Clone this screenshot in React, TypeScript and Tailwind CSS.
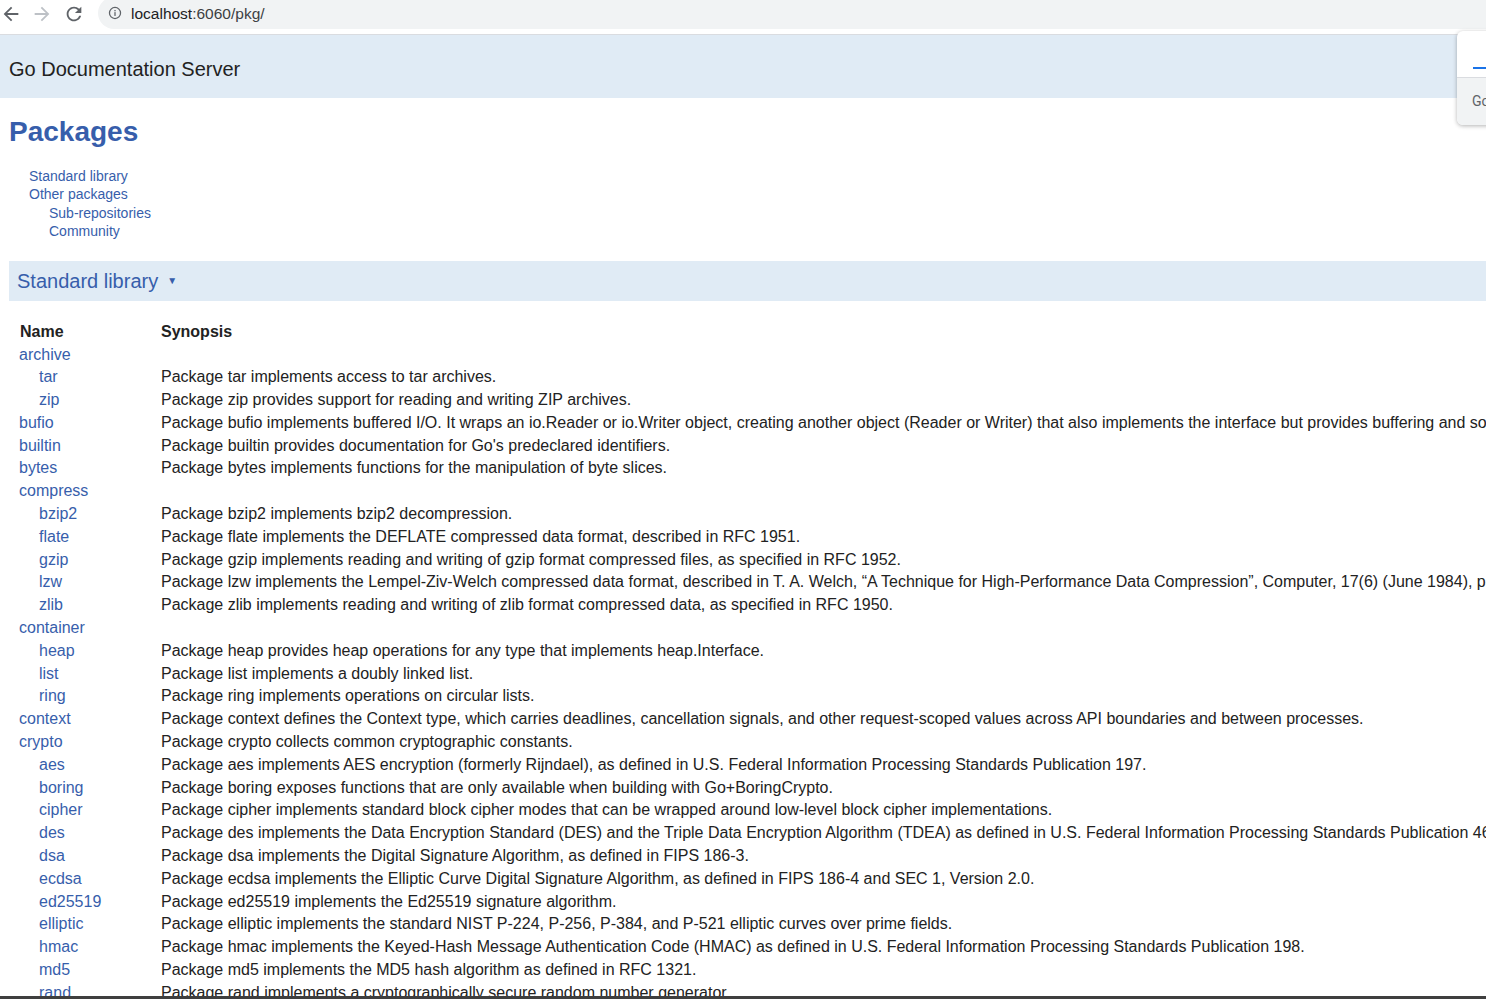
import React from 'react';

type Pkg = { name: string; sub?: boolean; synopsis?: string };

const packages: Pkg[] = [
  { name: 'archive' },
  { name: 'tar', sub: true, synopsis: 'Package tar implements access to tar archives.' },
  { name: 'zip', sub: true, synopsis: 'Package zip provides support for reading and writing ZIP archives.' },
  { name: 'bufio', synopsis: 'Package bufio implements buffered I/O. It wraps an io.Reader or io.Writer object, creating another object (Reader or Writer) that also implements the interface but provides buffering and some help for textual I/O.' },
  { name: 'builtin', synopsis: "Package builtin provides documentation for Go's predeclared identifiers." },
  { name: 'bytes', synopsis: 'Package bytes implements functions for the manipulation of byte slices.' },
  { name: 'compress' },
  { name: 'bzip2', sub: true, synopsis: 'Package bzip2 implements bzip2 decompression.' },
  { name: 'flate', sub: true, synopsis: 'Package flate implements the DEFLATE compressed data format, described in RFC 1951.' },
  { name: 'gzip', sub: true, synopsis: 'Package gzip implements reading and writing of gzip format compressed files, as specified in RFC 1952.' },
  { name: 'lzw', sub: true, synopsis: 'Package lzw implements the Lempel-Ziv-Welch compressed data format, described in T. A. Welch, \u201CA Technique for High-Performance Data Compression\u201D, Computer, 17(6) (June 1984), pp 8-19.' },
  { name: 'zlib', sub: true, synopsis: 'Package zlib implements reading and writing of zlib format compressed data, as specified in RFC 1950.' },
  { name: 'container' },
  { name: 'heap', sub: true, synopsis: 'Package heap provides heap operations for any type that implements heap.Interface.' },
  { name: 'list', sub: true, synopsis: 'Package list implements a doubly linked list.' },
  { name: 'ring', sub: true, synopsis: 'Package ring implements operations on circular lists.' },
  { name: 'context', synopsis: 'Package context defines the Context type, which carries deadlines, cancellation signals, and other request-scoped values across API boundaries and between processes.' },
  { name: 'crypto', synopsis: 'Package crypto collects common cryptographic constants.' },
  { name: 'aes', sub: true, synopsis: 'Package aes implements AES encryption (formerly Rijndael), as defined in U.S. Federal Information Processing Standards Publication 197.' },
  { name: 'boring', sub: true, synopsis: 'Package boring exposes functions that are only available when building with Go+BoringCrypto.' },
  { name: 'cipher', sub: true, synopsis: 'Package cipher implements standard block cipher modes that can be wrapped around low-level block cipher implementations.' },
  { name: 'des', sub: true, synopsis: 'Package des implements the Data Encryption Standard (DES) and the Triple Data Encryption Algorithm (TDEA) as defined in U.S. Federal Information Processing Standards Publication 46-3.' },
  { name: 'dsa', sub: true, synopsis: 'Package dsa implements the Digital Signature Algorithm, as defined in FIPS 186-3.' },
  { name: 'ecdsa', sub: true, synopsis: 'Package ecdsa implements the Elliptic Curve Digital Signature Algorithm, as defined in FIPS 186-4 and SEC 1, Version 2.0.' },
  { name: 'ed25519', sub: true, synopsis: 'Package ed25519 implements the Ed25519 signature algorithm.' },
  { name: 'elliptic', sub: true, synopsis: 'Package elliptic implements the standard NIST P-224, P-256, P-384, and P-521 elliptic curves over prime fields.' },
  { name: 'hmac', sub: true, synopsis: 'Package hmac implements the Keyed-Hash Message Authentication Code (HMAC) as defined in U.S. Federal Information Processing Standards Publication 198.' },
  { name: 'md5', sub: true, synopsis: 'Package md5 implements the MD5 hash algorithm as defined in RFC 1321.' },
  { name: 'rand', sub: true, synopsis: 'Package rand implements a cryptographically secure random number generator.' },
  { name: 'rc4', sub: true, synopsis: "Package rc4 implements RC4 encryption, as defined in Bruce Schneier's Applied Cryptography." },
  { name: 'rsa', sub: true, synopsis: 'Package rsa implements RSA encryption as specified in PKCS #1 and RFC 8017.' },
];

const BrowserBar: React.FC = () => (
  <div className="h-[35px] bg-white border-b border-[#dadce0] flex items-start relative">
    {/* nav buttons */}
    <div className="flex items-center h-[27px]">
      <svg width="22" height="22" viewBox="0 0 24 24">
        <path d="M20 11H7.83l5.59-5.59L12 4l-8 8 8 8 1.41-1.41L7.83 13H20v-2z" fill="#5f6368" />
      </svg>
      <svg width="22" height="22" viewBox="0 0 24 24" className="ml-[9px]">
        <path d="M12 4l-1.41 1.41L16.17 11H4v2h12.17l-5.58 5.59L12 20l8-8z" fill="#bdc1c6" />
      </svg>
      <svg width="22" height="22" viewBox="0 0 24 24" className="ml-[10px]">
        <path d="M17.65 6.35A7.958 7.958 0 0 0 12 4c-4.42 0-7.990 3.58-7.990 8s3.57 8 7.990 8c3.73 0 6.84-2.55 7.73-6h-2.08A5.99 5.99 0 0 1 12 18c-3.31 0-6-2.69-6-6s2.69-6 6-6c1.66 0 3.14.69 4.22 1.78L13 11h7V4l-2.35 2.35z" fill="#5f6368" />
      </svg>
    </div>
    <div className="ml-[13px] -mt-[3px] h-[32px] flex-1 rounded-l-full bg-[#f1f3f4] flex items-center pl-[10px]">
      <svg width="14" height="14" viewBox="0 0 24 24">
        <circle cx="12" cy="12" r="9.5" fill="none" stroke="#5f6368" strokeWidth="2.2" />
        <rect x="10.9" y="10.5" width="2.2" height="6.5" fill="#5f6368" />
        <rect x="10.9" y="6.8" width="2.2" height="2.3" fill="#5f6368" />
      </svg>
      <span className="ml-[9px] text-[15.5px] text-[#202124] font-['Liberation_Sans',Arial,sans-serif] leading-none pt-[1px]">
        localhost<span className="text-[#3c4043]">:6060/pkg/</span>
      </span>
    </div>
  </div>
);

const TranslatePopup: React.FC = () => (
  <div className="absolute left-[1457px] top-[31px] w-[60px] h-[94px] rounded-[6px] bg-white shadow-[0_1px_4px_rgba(0,0,0,0.3)] overflow-hidden flex flex-col">
    <div className="h-[47px] border-b border-[#dadce0] relative">
      <div className="absolute left-[16px] top-[36px] w-[40px] h-[2px] bg-[#1a73e8]" />
    </div>
    <div className="flex-1 bg-[#f1f3f4] flex items-center pl-[15px] text-[14px] text-[#5f6368] font-['Roboto',sans-serif]">
      Go
    </div>
  </div>
);

export default function App() {
  return (
    <div className="relative w-full h-[999px] overflow-hidden bg-white font-['Liberation_Sans',Arial,sans-serif] text-[#222]">
      <BrowserBar />
      <TranslatePopup />

      <div className="h-[63px] bg-[#e0ebf5] flex items-center px-[9px] text-[20px] text-[#222] pt-[5px]">
        Go Documentation Server
      </div>

      <div className="pl-[9px]">
        <h1 className="mt-[17px] h-[34px] leading-[34px] text-[28px] font-bold text-[#375eab]">Packages</h1>

        <ul className="mt-[18px] text-[14px] leading-[18.4px] text-[#375eab]">
          <li className="pl-[20px]">Standard library</li>
          <li className="pl-[20px]">Other packages</li>
          <li className="pl-[40px]">Sub-repositories</li>
          <li className="pl-[40px]">Community</li>
        </ul>

        <div className="mt-[20px] h-[40px] bg-[#e0ebf5] flex items-center pl-[8px] text-[20px] text-[#375eab] whitespace-nowrap">
          Standard library
          <span className="ml-[9px] text-[10px] leading-none mt-[1px]">▼</span>
        </div>

        <div className="mt-[20px] ml-[10px] text-[16px] leading-[20.8px] whitespace-nowrap">
          <div className="flex pt-[1px] pb-[1px] font-bold text-[#222]">
            <div className="w-[142px] shrink-0 pl-[1px]">Name</div>
            <div>Synopsis</div>
          </div>
          {packages.map((p, i) => (
            <div key={p.name} className={`flex ${i === 0 ? 'pt-[2px]' : 'py-px'}`}>
              <div className={`w-[142px] shrink-0 text-[#375eab] ${p.sub ? 'pl-[20px]' : ''}`}>{p.name}</div>
              <div className="text-[#222]">{p.synopsis ?? ''}</div>
            </div>
          ))}
        </div>
      </div>

      <div className="absolute left-0 right-0 bottom-0 h-[3px] bg-[#3f3f3f]" />
    </div>
  );
}
